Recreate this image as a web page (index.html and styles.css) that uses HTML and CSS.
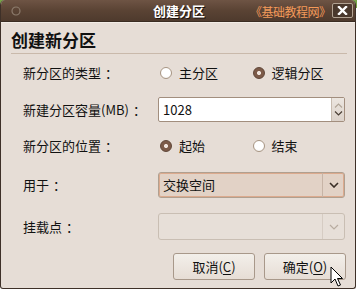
FILE: index.html
```html
<!DOCTYPE html>
<html lang="zh-CN">
<head>
<meta charset="utf-8">
<title>创建分区</title>
<link rel="stylesheet" href="styles.css">
</head>
<body>
<div class="window">
  <div class="titlebar">
    <div class="tb-left">
      <svg class="tb-icon" width="10" height="10" viewBox="0 0 10 10"><circle cx="5" cy="5" r="4" fill="none" stroke="#8c7b6c" stroke-width="1.2"/></svg>
    </div>
    <div class="tb-title">创建分区</div>
    <div class="tb-right">
      <div class="close-btn">
        <svg width="11" height="9" viewBox="0 0 11 9"><path d="M2 1 L9 8 M9 1 L2 8" stroke="#fff" stroke-width="2.4" stroke-linecap="square"/></svg>
      </div>
    </div>
    <div class="watermark">《基础教程网》</div>
  </div>
  <div class="content">
    <div class="heading">创建新分区</div>
    <div class="sep"></div>
    <div class="form">
      <div class="label">新分区的类型<span class="colon">：</span></div>
      <div class="radios">
        <div class="radio-opt"><span class="radio"></span><span>主分区</span></div>
        <div class="radio-opt"><span class="radio checked"></span><span>逻辑分区</span></div>
      </div>

      <div class="label">新建分区容量(MB)<span class="colon">：</span></div>
      <div class="spin">
        <div class="spin-text">1028</div>
        <div class="spin-btns">
          <svg width="9" height="5" viewBox="0 0 9 5"><path d="M1 4.5 L4.5 1 L8 4.5" fill="none" stroke="#b0a496" stroke-width="1.1"/></svg>
          <svg width="9" height="5" viewBox="0 0 9 5"><path d="M1 0.5 L4.5 4 L8 0.5" fill="none" stroke="#4a3e34" stroke-width="1.2"/></svg>
        </div>
      </div>

      <div class="label">新分区的位置<span class="colon">：</span></div>
      <div class="radios">
        <div class="radio-opt"><span class="radio checked"></span><span>起始</span></div>
        <div class="radio-opt"><span class="radio"></span><span>结束</span></div>
      </div>

      <div class="label">用于<span class="colon">：</span></div>
      <div class="combo active">
        <div class="combo-text">交换空间</div>
        <div class="combo-arrow">
          <svg width="10" height="6" viewBox="0 0 10 6"><path d="M1 1 L5 5 L9 1" fill="none" stroke="#3a2e26" stroke-width="1.6"/></svg>
        </div>
      </div>

      <div class="label">挂载点<span class="colon">：</span></div>
      <div class="combo disabled">
        <div class="combo-text"></div>
        <div class="combo-arrow">
          <svg width="10" height="6" viewBox="0 0 10 6"><path d="M1 1 L5 5 L9 1" fill="none" stroke="#b8aca0" stroke-width="1.2"/></svg>
        </div>
      </div>
    </div>
    <div class="buttons">
      <div class="btn">取消(<u>C</u>)</div>
      <div class="btn">确定(<u>O</u>)</div>
    </div>
  </div>
  <svg class="cursor" width="14" height="22" viewBox="0 0 14 22"><path d="M1 1 L1 17 L5 13 L8 20 L10.5 19 L7.5 12.5 L12.5 12.5 Z" fill="#fff" stroke="#000" stroke-width="1" stroke-linejoin="round"/></svg>
</div>
</body>
</html>
```
FILE: styles.css
```css
html, body {
  margin: 0;
  padding: 0;
}
body {
  width: 357px;
  height: 291px;
  background: linear-gradient(#78a448 0, #78a448 8px, #ffffff 8px);
  font-family: "Noto Sans CJK SC", "DejaVu Sans", sans-serif;
  color: #111;
  overflow: hidden;
}
.window {
  position: relative;
  width: 356px;
  height: 289px;
  box-sizing: border-box;
  border: 1px solid #3e3028;
  border-top: none;
  border-radius: 5px 5px 3px 3px;
  background: #e6ddd6;
  display: flex;
  flex-direction: column;
  overflow: hidden;
}
.titlebar {
  position: relative;
  height: 22px;
  flex: none;
  display: grid;
  grid-template-columns: 1fr auto 1fr;
  align-items: center;
  background: linear-gradient(#6e5444, #5a4334 50%, #4e3a2d);
  border-bottom: 1px solid #3a2c22;
  box-sizing: border-box;
}
.tb-left {
  display: flex;
  align-items: center;
  padding-left: 10px;
}
.tb-icon { display: block; }
.tb-title {
  color: #fff;
  font-weight: bold;
  font-size: 13px;
  line-height: 16px;
  text-shadow: 1px 1px 0 #1e140e;
  padding-left: 2px;
}
.tb-right {
  display: flex;
  justify-content: flex-end;
  padding-right: 2px;
}
.close-btn {
  width: 19px;
  height: 13px;
  border: 1px solid #b2a292;
  border-radius: 2px;
  background: #4a382c;
  display: flex;
  align-items: center;
  justify-content: center;
}
.close-btn svg { display: block; }
.watermark {
  position: absolute;
  left: 249px;
  top: 4px;
  color: #f39a5a;
  font-size: 12px;
  line-height: 16px;
  letter-spacing: -0.5px;
}
.content {
  flex: 1;
  display: flex;
  flex-direction: column;
  padding: 8px 8px 0 10px;
  border-top: 1px solid #f2ece6;
}
.heading {
  font-size: 17px;
  font-weight: bold;
  line-height: 20px;
  color: #111;
  margin-top: -1px;
}
.sep {
  height: 1px;
  background: #c9b9ab;
  margin-top: 3px;
}
.form {
  display: grid;
  grid-template-columns: 135px 187px;
  grid-template-rows: 37px 37px 35px 44px 39px;
  align-items: center;
  padding-left: 12px;
}
.label {
  font-size: 13px;
  line-height: 16px;
  white-space: nowrap;
}
.colon {
  display: inline-block;
  margin-left: 4px;
}
.radios {
  display: flex;
  align-items: center;
  padding-left: 2px;
}
.radio-opt {
  display: flex;
  align-items: center;
  gap: 7px;
  width: 94px;
  font-size: 13px;
  line-height: 16px;
}
.radio {
  width: 12px;
  height: 12px;
  box-sizing: border-box;
  border-radius: 50%;
  border: 1px solid #a89684;
  background: radial-gradient(circle at 50% 40%, #ffffff 55%, #ece6e0);
  flex: none;
}
.radio.checked {
  border: 1px solid #5e4436;
  background: radial-gradient(circle, #efe3dc 0, #efe3dc 1.6px, #7c5a48 2.4px, #7c5a48 100%);
}
.spin {
  height: 25px;
  box-sizing: border-box;
  border: 1px solid #a28e7e;
  border-radius: 2px;
  background: #fff;
  display: flex;
}
.spin-text {
  flex: 1;
  font-size: 13px;
  line-height: 23px;
  padding-left: 4px;
}
.spin-btns {
  width: 12px;
  border-left: 1px solid #c8bcb0;
  background: linear-gradient(#ece6e0, #dcd2ca);
  display: flex;
  flex-direction: column;
  align-items: center;
  justify-content: center;
  gap: 3px;
}
.spin-btns svg { display: block; }
.combo {
  height: 27px;
  box-sizing: border-box;
  border-radius: 3px;
  display: flex;
}
.combo.active {
  height: 26px;
  border: 1px solid #b0a090;
  background: #e2d2c6;
  box-shadow: inset 0 0 0 1px #dcaa8e;
}
.combo.disabled {
  border: 1px solid #c9beb3;
  background: #e7dfd8;
}
.combo-text {
  flex: 1;
  font-size: 13px;
  line-height: 24px;
  padding-left: 4px;
}
.combo-arrow {
  width: 21px;
  display: flex;
  align-items: center;
  justify-content: center;
  border-left: 1px solid #c7b4a6;
}
.combo.disabled .combo-arrow { border-left-color: #d6ccc3; }
.combo-arrow svg { display: block; }
.buttons {
  display: flex;
  justify-content: flex-end;
  gap: 9px;
  margin-top: 7px;
  padding-right: 1px;
}
.btn {
  width: 82px;
  height: 27px;
  box-sizing: border-box;
  border: 1px solid #a8988a;
  border-radius: 3px;
  background: linear-gradient(#f3efea, #e6ddd5);
  font-size: 13px;
  line-height: 25px;
  text-align: center;
  color: #111;
}
.btn u { text-decoration-thickness: 1px; text-underline-offset: 2px; }
.cursor {
  position: absolute;
  left: 329px;
  top: 266px;
}
```
